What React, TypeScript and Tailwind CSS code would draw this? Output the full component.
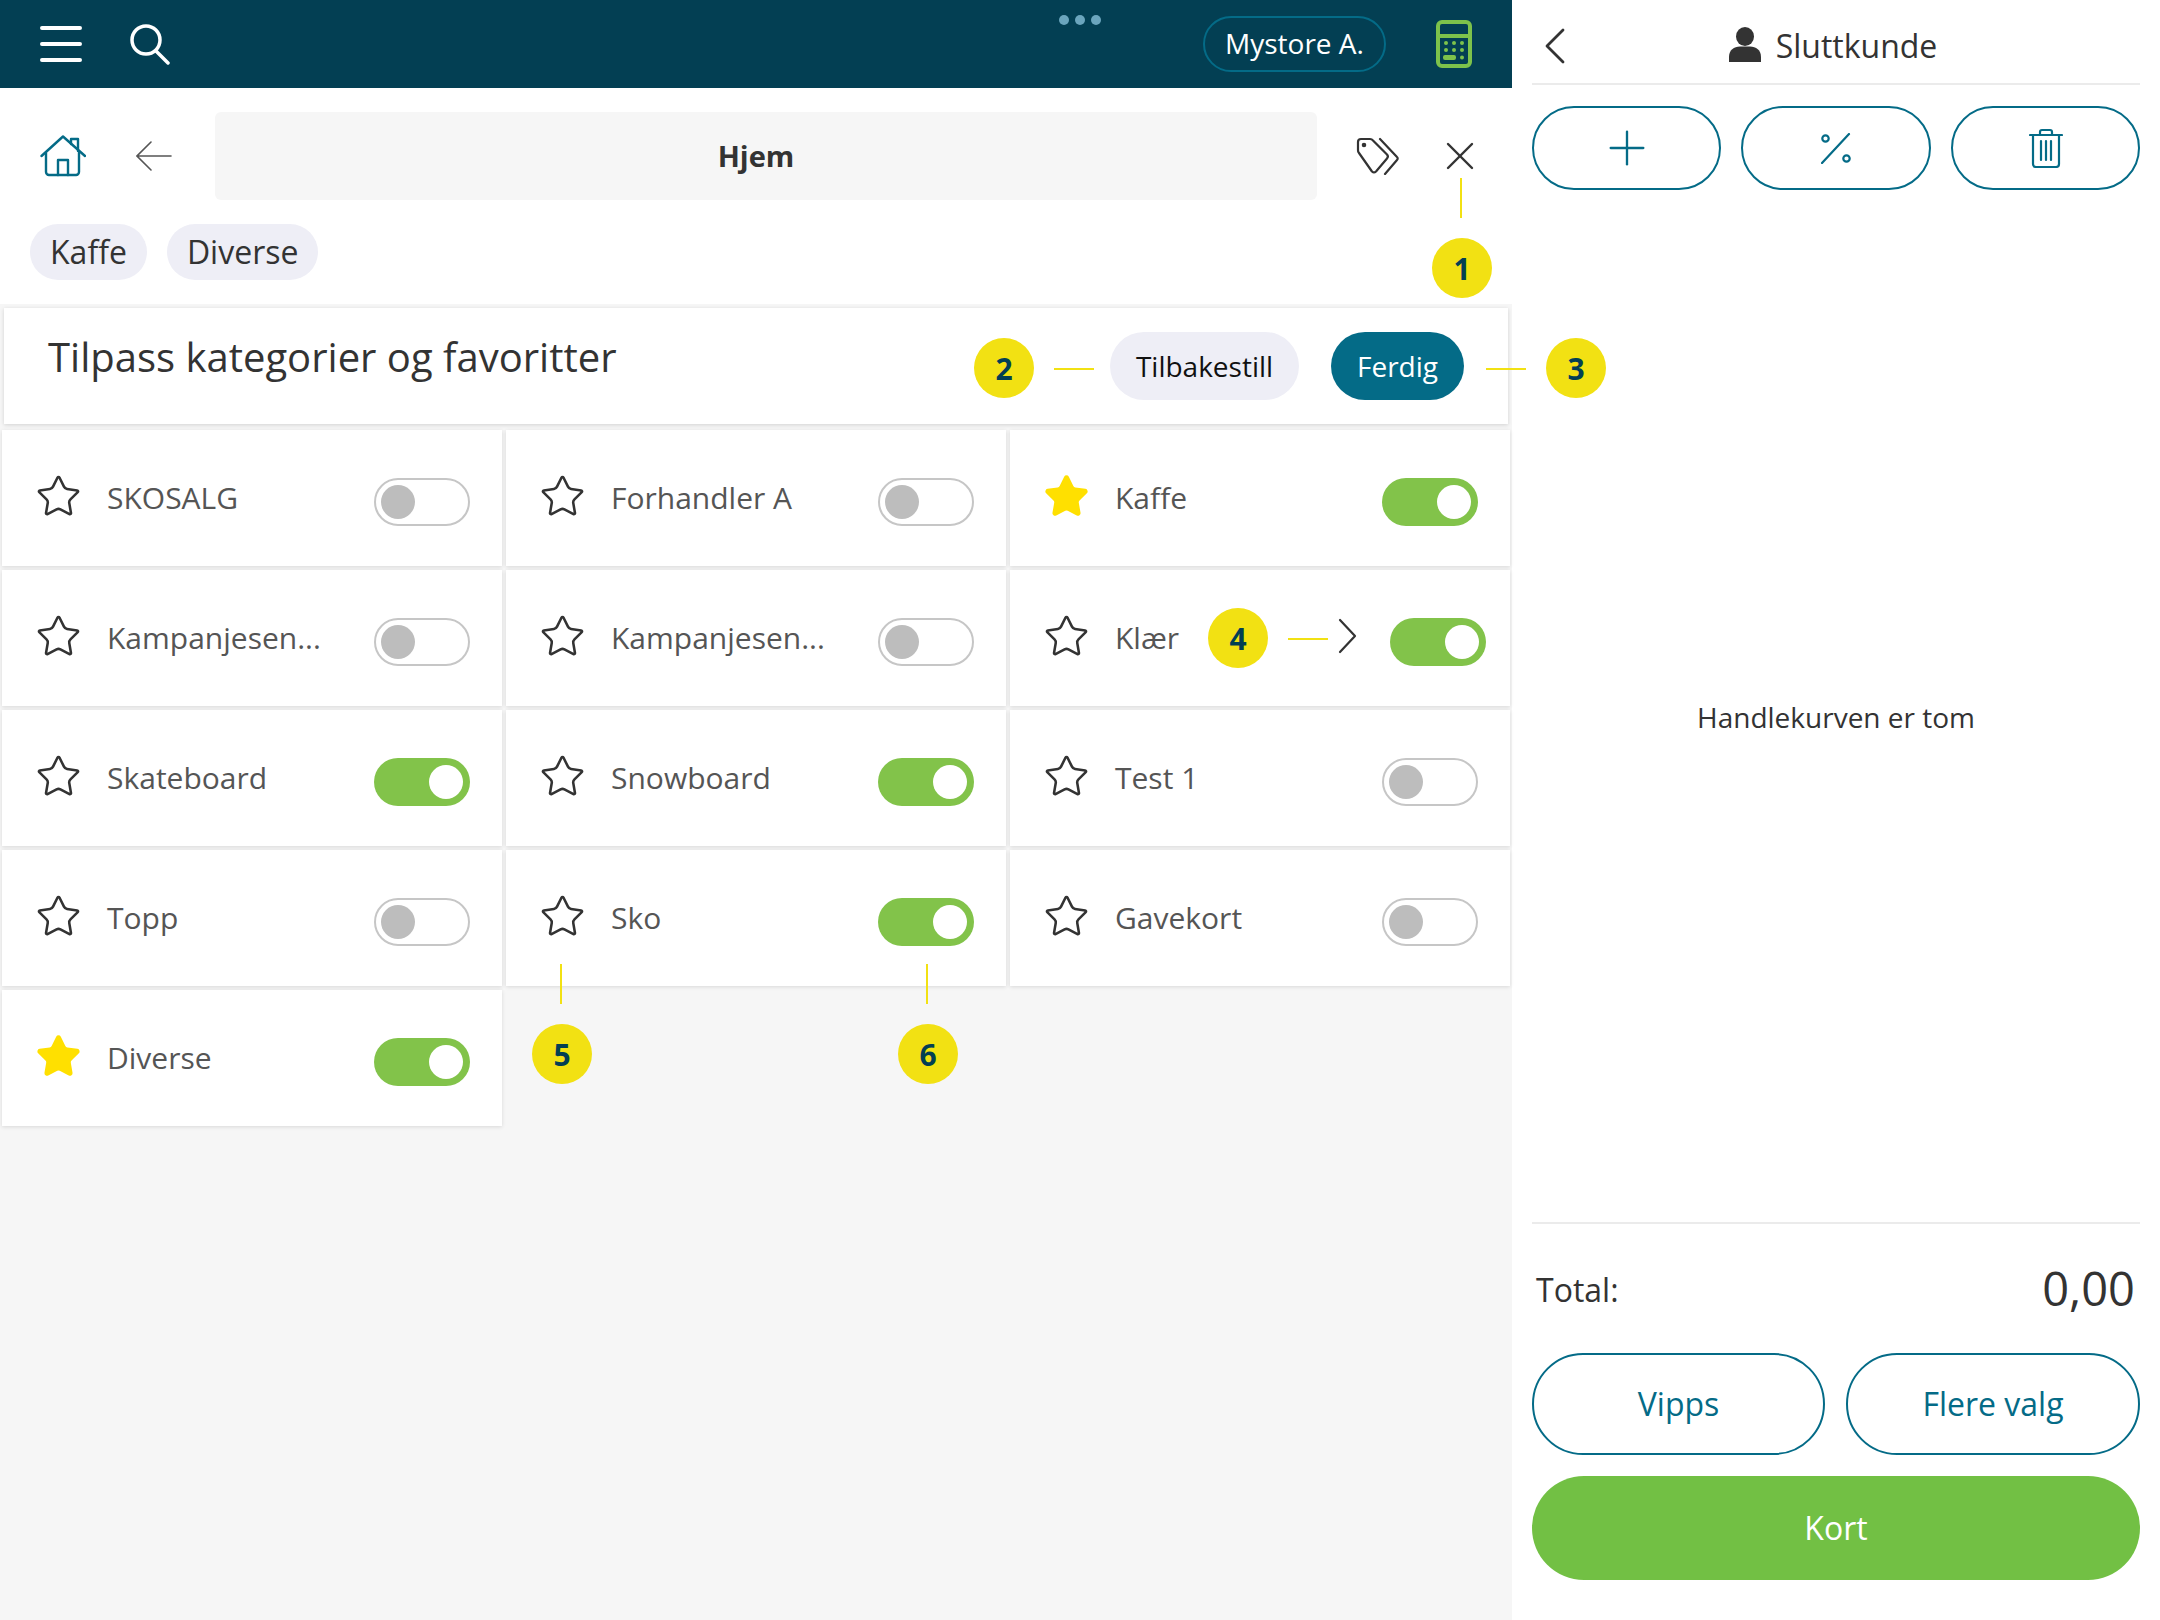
import { Plus, Star, X } from 'lucide-react';

type Cat = { name: string; fav?: boolean; on?: boolean; chevron?: boolean };

const categories: Cat[] = [
  { name: 'SKOSALG' },
  { name: 'Forhandler A' },
  { name: 'Kaffe', fav: true, on: true },
  { name: 'Kampanjesen...' },
  { name: 'Kampanjesen...' },
  { name: 'Klær', on: true, chevron: true },
  { name: 'Skateboard', on: true },
  { name: 'Snowboard', on: true },
  { name: 'Test 1' },
  { name: 'Topp' },
  { name: 'Sko', on: true },
  { name: 'Gavekort' },
  { name: 'Diverse', fav: true, on: true },
];

function Toggle({ on }: { on?: boolean }) {
  return on ? (
    <div className="w-[96px] h-[48px] rounded-full bg-[#82c34a] flex items-center justify-end pr-[7px]">
      <div className="w-[34px] h-[34px] rounded-full bg-white" />
    </div>
  ) : (
    <div className="w-[96px] h-[48px] rounded-full bg-white border-2 border-[#c6c6c6] flex items-center pl-[5px]">
      <div className="w-[34px] h-[34px] rounded-full bg-[#bdbdbd]" />
    </div>
  );
}

function CategoryCell({ cat }: { cat: Cat }) {
  return (
    <div className="h-[136px] bg-white shadow-[0_1px_4px_rgba(0,0,0,0.12)] flex items-center pl-[33px] pr-[32px] relative">
      {cat.fav ? (
        <Star size={47} strokeWidth={1.6} className="text-[#ffe000] fill-[#ffe000] -mt-[4px] shrink-0" />
      ) : (
        <Star size={47} strokeWidth={1.3} className="text-[#333333] -mt-[4px] shrink-0" />
      )}
      <span className="ml-[25px] text-[30px] text-[#555555] -mt-[2px]">{cat.name}</span>
      <div className="flex-1" />
      {cat.chevron && (
        <>
          <svg className="mr-[33px] -mt-[4px] shrink-0" width="19" height="36" viewBox="0 0 19 36" fill="none" stroke="#333333" strokeWidth="2.2" strokeLinecap="round" strokeLinejoin="round">
            <path d="M2 2l15 16L2 34" />
          </svg>
          <div className="w-[96px] h-[48px] -mr-[8px] mt-[7px] shrink-0"><Toggle on={cat.on} /></div>
        </>
      )}
      {!cat.chevron && <div className="mt-[7px]"><Toggle on={cat.on} /></div>}
    </div>
  );
}

function Badge({ n, className }: { n: number; className: string }) {
  return (
    <div className={`absolute w-[60px] h-[60px] rounded-full bg-[#f2e113] text-[#033f53] font-bold text-[30px] flex items-center justify-center ${className}`}>
      {n}
    </div>
  );
}

function OutlineButton({ children, className }: { children: React.ReactNode; className: string }) {
  return (
    <button className={`rounded-full border-2 border-[#046b87] bg-white text-[#046b87] flex items-center justify-center ${className}`}>
      {children}
    </button>
  );
}

export default function App() {
  return (
    <div className="w-[2160px] h-[1620px] flex font-['Open_Sans',sans-serif] overflow-hidden relative">
      <div className="w-[1512px] h-full bg-[#f6f6f6] flex flex-col relative">
        <div className="h-[88px] bg-[#033f53] flex items-center pl-[40px] pr-[40px] relative shrink-0">
          <svg width="42" height="38" viewBox="0 0 42 38" fill="none" stroke="white" strokeWidth="4" strokeLinecap="round">
            <path d="M2 3h38M2 19h38M2 35h38" />
          </svg>
          <svg className="ml-[47px]" width="42" height="42" viewBox="0 0 42 42" fill="none" stroke="white" strokeWidth="3.5" strokeLinecap="round">
            <circle cx="17" cy="17" r="14" />
            <path d="M27 28l12 12" />
          </svg>
          <div className="absolute left-[1059px] top-[15px] flex gap-[6px]">
            <div className="w-[10px] h-[10px] rounded-full bg-[#6ba5bd]" />
            <div className="w-[10px] h-[10px] rounded-full bg-[#6ba5bd]" />
            <div className="w-[10px] h-[10px] rounded-full bg-[#6ba5bd]" />
          </div>
          <div className="flex-1" />
          <div className="w-[183px] h-[56px] rounded-full border-2 border-[#046b87] text-white text-[28px] flex items-center justify-center -mt-[1px]">
            <span className="-mt-[2px]">Mystore A.</span>
          </div>
          <svg className="ml-[50px]" width="36" height="48" viewBox="0 0 36 48" fill="none">
            <rect x="2" y="2" width="32" height="44" rx="4" stroke="#7dc24b" strokeWidth="4" />
            <path d="M2 16h32" stroke="#7dc24b" strokeWidth="4" />
            <g fill="#7dc24b">
              <circle cx="10" cy="23" r="2" /><circle cx="18" cy="23" r="2" /><circle cx="26" cy="23" r="2" />
              <circle cx="10" cy="30" r="2" /><circle cx="18" cy="30" r="2" /><circle cx="26" cy="30" r="2" />
              <rect x="7" y="35" width="13" height="5" rx="2" /><circle cx="26" cy="37.500" r="2" />
            </g>
          </svg>
        </div>

        <div className="h-[216px] bg-white shrink-0 flex flex-col">
          <div className="flex items-center pt-[24px] h-[112px] shrink-0">
            <svg className="ml-[40px]" width="46" height="42" viewBox="0 0 46 42" fill="none" stroke="#046b87" strokeWidth="2.4" strokeLinejoin="round" strokeLinecap="round">
              <path d="M1.500 21L23 1.500l22 19.500" />
              <path d="M6 18v19a3 3 0 0 0 3 3h27a3 3 0 0 0 3-3V18" />
              <path d="M18 40V25h10v15" />
              <path d="M31 9V4h7v12" />
            </svg>
            <svg className="ml-[50px]" width="36" height="30" viewBox="0 0 36 30" fill="none" stroke="#555555" strokeWidth="1.6" strokeLinecap="round">
              <path d="M15 1L1 15l14 14M1 15h34" />
            </svg>
            <div className="ml-[43px] w-[1102px] h-[88px] rounded-[6px] bg-[#f6f6f6] flex items-center justify-center text-[29px] font-bold text-[#333333] pr-[20px]">
              Hjem
            </div>
            <svg className="ml-[39px]" width="44" height="38" viewBox="0 0 44 38" fill="none" stroke="#333333" strokeWidth="2.2" strokeLinejoin="round" strokeLinecap="round">
              <path d="M5 2h9a4 4 0 0 1 3 1.500l14 14a3 3 0 0 1 0 4l-11 13a3 3 0 0 1-4 0L3 16a4 4 0 0 1-1-3V5a3 3 0 0 1 3-3z" />
              <circle cx="8" cy="8" r="1.200" />
              <path d="M24 2l17 18a2 2 0 0 1 0 3L29 37" />
            </svg>
            <X size={48} strokeWidth={1.2} className="ml-[36px] text-[#333333]" />
          </div>
          <div className="flex gap-[20px] pl-[30px] mt-[24px]">
            <div className="h-[56px] px-[20px] rounded-full bg-[#eeeef6] text-[32px] text-[#333333] flex items-center">Kaffe</div>
            <div className="h-[56px] px-[20px] rounded-full bg-[#eeeef6] text-[32px] text-[#333333] flex items-center">Diverse</div>
          </div>
        </div>

        <div className="h-[116px] mt-[4px] mx-[4px] bg-white shadow-[0_1px_4px_rgba(0,0,0,0.15)] flex items-center shrink-0">
          <span className="ml-[44px] text-[40px] text-[#333333] -mt-[18px]">Tilpass kategorier og favoritter</span>
          <div className="flex-1" />
          <button className="w-[189px] h-[68px] rounded-full bg-[#eeeef6] text-[28px] text-[#111111]">Tilbakestill</button>
          <button className="ml-[32px] w-[133px] h-[68px] rounded-full bg-[#046b87] text-[28px] text-white mr-[44px]">Ferdig</button>
        </div>

        <div className="grid grid-cols-[500px_500px_500px] gap-[4px] pl-[2px] pt-[6px]">
          {categories.map((c, i) => (
            <CategoryCell key={i} cat={c} />
          ))}
        </div>

        <div className="absolute left-[1460px] top-[178px] w-[2px] h-[40px] bg-[#f2e113]" />
        <Badge n={1} className="left-[1432px] top-[238px]" />
        <Badge n={2} className="left-[974px] top-[338px]" />
        <div className="absolute left-[1054px] top-[368px] w-[40px] h-[2px] bg-[#f2e113]" />
        <Badge n={4} className="left-[1208px] top-[608px]" />
        <div className="absolute left-[1288px] top-[638px] w-[40px] h-[2px] bg-[#f2e113]" />
        <div className="absolute left-[560px] top-[964px] w-[2px] h-[40px] bg-[#f2e113]" />
        <div className="absolute left-[926px] top-[964px] w-[2px] h-[40px] bg-[#f2e113]" />
        <Badge n={5} className="left-[532px] top-[1024px]" />
        <Badge n={6} className="left-[898px] top-[1024px]" />
      </div>

      <div className="w-[648px] h-full bg-white flex flex-col pl-[20px] pr-[20px]">
        <div className="h-[85px] border-b-2 border-[#ebebeb] flex items-center justify-center relative shrink-0 pt-[8px] pr-[6px]">
          <svg className="absolute left-[13px] top-[28px]" width="20" height="36" viewBox="0 0 20 36" fill="none" stroke="#333333" strokeWidth="2.800" strokeLinecap="round" strokeLinejoin="round">
            <path d="M18 2L2 18l16 16" />
          </svg>
          <svg className="-mt-[3px]" width="32" height="35" viewBox="0 0 32 35" fill="#333333">
            <ellipse cx="16" cy="9.500" rx="9" ry="9.500" />
            <path d="M0 35v-5c0-7 5-10.500 11-10.500h10c6 0 11 3.500 11 10.500v5z" />
          </svg>
          <span className="ml-[15px] text-[32px] text-[#333333]">Sluttkunde</span>
        </div>
        <div className="flex gap-[20px] mt-[21px] shrink-0">
          <OutlineButton className="w-[189px] h-[84px]"><Plus size={56} strokeWidth={1} /></OutlineButton>
          <OutlineButton className="w-[190px] h-[84px]">
            <svg width="30" height="31" viewBox="0 0 30 31" fill="none" stroke="#046b87" strokeWidth="2.200" strokeLinecap="round">
              <path d="M1 30L28 1" />
              <circle cx="4.500" cy="5.500" r="3.200" />
              <circle cx="25.500" cy="25.500" r="3.200" />
            </svg>
          </OutlineButton>
          <OutlineButton className="w-[189px] h-[84px]">
            <svg width="34" height="40" viewBox="0 0 34 40" fill="none" stroke="#046b87" strokeWidth="2.200" strokeLinecap="round" strokeLinejoin="round">
              <path d="M1 7h32M11 7V4a2 2 0 0 1 2-2h8a2 2 0 0 1 2 2v3" />
              <path d="M4 7v29a3 3 0 0 0 3 3h20a3 3 0 0 0 3-3V7" />
              <path d="M12 13v19M17 13v19M22 13v19" />
            </svg>
          </OutlineButton>
        </div>
        <div className="flex-1 flex items-center justify-center text-[28px] text-[#333333] pt-[22px]">Handlekurven er tom</div>
        <div className="border-t-2 border-[#ebebeb] h-[111px] flex items-center justify-between pl-[4px] pr-[5px] pt-[22px] shrink-0">
          <span className="text-[32px] text-[#333333]">Total:</span>
          <span className="text-[47px] text-[#333333] -mt-[2px]">0,00</span>
        </div>
        <div className="flex gap-[21px] mt-[20px] shrink-0">
          <OutlineButton className="w-[293px] h-[102px] text-[32px]">Vipps</OutlineButton>
          <OutlineButton className="w-[294px] h-[102px] text-[32px]">Flere valg</OutlineButton>
        </div>
        <button className="mt-[21px] mb-[40px] h-[104px] shrink-0 rounded-full bg-[#72c044] text-white text-[32px]">Kort</button>
      </div>

      <div className="absolute left-[1486px] top-[368px] w-[40px] h-[2px] bg-[#f2e113]" />
      <Badge n={3} className="left-[1546px] top-[338px]" />
    </div>
  );
}
